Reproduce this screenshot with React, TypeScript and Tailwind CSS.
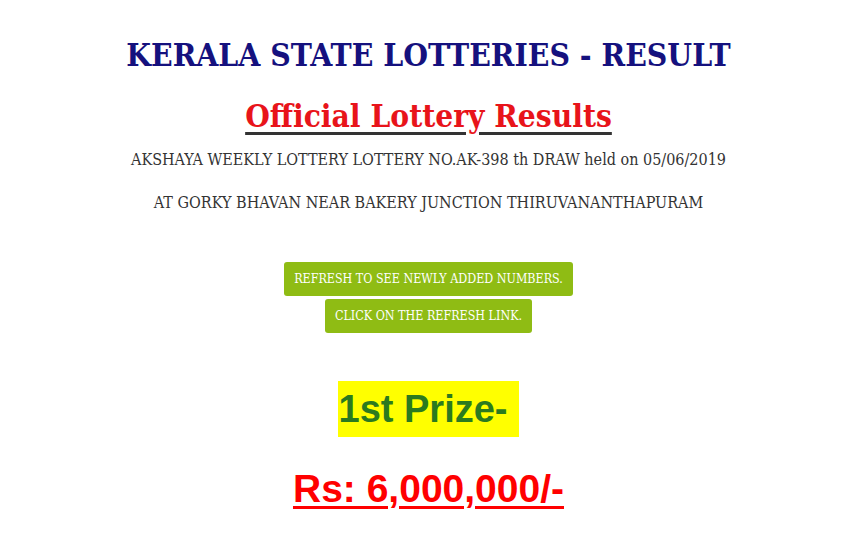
export default function App() {
  const slab = "font-['DejaVu_Serif_Condensed','DejaVu_Serif','Liberation_Serif',serif]"

  return (
    <div className="min-h-[550px] w-full bg-white">
      <div className="ml-[7px] flex flex-col items-center pt-[33px]">
        <h1 className={`${slab} text-[31.6px] leading-[44px] font-bold text-[#15117e]`}>
          KERALA STATE LOTTERIES - RESULT
        </h1>
        <h2 className={`${slab} mt-[19px] text-[31.4px] leading-[40px] font-bold text-[#e8141a] underline decoration-[#333] decoration-[3px] underline-offset-[5px]`}>
          Official Lottery Results
        </h2>
        <p className={`${slab} mt-[13px] text-[16px] leading-[22px] text-[#333]`}>
          AKSHAYA WEEKLY LOTTERY LOTTERY NO.AK-398 th DRAW held on 05/06/2019
        </p>
        <p className={`${slab} mt-[21px] text-[16px] leading-[22px] text-[#333]`}>
          AT GORKY BHAVAN NEAR BAKERY JUNCTION THIRUVANANTHAPURAM
        </p>

        <div className="mt-[48px] flex flex-col items-center gap-[3px]">
          <a href="#0" className={`${slab} flex h-[34px] items-center rounded-[3px] bg-[#8fbc14] px-[10px] text-[12.4px] text-white`}>
            REFRESH TO SEE NEWLY ADDED NUMBERS.
          </a>
          <a href="#0" className={`${slab} flex h-[34px] items-center rounded-[3px] bg-[#8fbc14] px-[10px] text-[12.4px] text-white`}>
            CLICK ON THE REFRESH LINK.
          </a>
        </div>

        <div className="mt-[48px] flex h-[56px] items-center bg-[#ffff00] pr-[12px] pl-[1px] font-['Liberation_Sans',Arial,sans-serif] text-[38px] font-bold text-[#2b7a1f]">
          1st Prize-
        </div>

        <div className="mt-[30px] font-['Liberation_Sans',Arial,sans-serif] text-[39px] leading-[44px] font-bold text-[#f00] underline decoration-[3px] underline-offset-[4px]">
          Rs: 6,000,000/-
        </div>
      </div>
    </div>
  )
}
